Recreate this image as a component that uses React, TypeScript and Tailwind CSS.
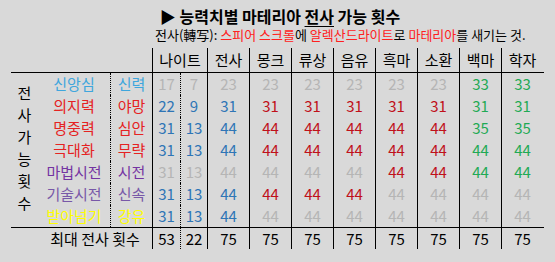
const font = "font-['Noto_Sans_CJK_KR','Noto_Sans_CJK_SC',sans-serif]";

const tone: Record<string, string> = {
  g: "text-[#b5b5b5]",
  b: "text-[#2e75b6]",
  r: "text-[#c0101a]",
  e: "text-[#1faa55]",
};

const jobs = ["전사", "몽크", "류상", "음유", "흑마", "소환", "백마", "학자"];

type Row = { name: string; abbr: string; color: string; values: string[] };

const rows: Row[] = [
  {
    name: "신앙심",
    abbr: "신력",
    color: "text-[#3fa6dd]",
    values: ["17g", "7g", "23g", "23g", "23g", "23g", "23g", "23g", "33e", "33e"],
  },
  {
    name: "의지력",
    abbr: "야망",
    color: "text-[#e52222]",
    values: ["22b", "9b", "31b", "31r", "31r", "31r", "31r", "31r", "31e", "31e"],
  },
  {
    name: "명중력",
    abbr: "심안",
    color: "text-[#e52222]",
    values: ["31b", "13b", "44b", "44r", "44r", "44r", "44r", "44r", "35e", "35e"],
  },
  {
    name: "극대화",
    abbr: "무략",
    color: "text-[#e52222]",
    values: ["31b", "13b", "44b", "44r", "44r", "44r", "44r", "44r", "44e", "44e"],
  },
  {
    name: "마법시전",
    abbr: "시전",
    color: "text-[#7434a2]",
    values: ["31g", "13g", "44g", "44g", "44g", "44g", "44r", "44r", "44e", "44e"],
  },
  {
    name: "기술시전",
    abbr: "신속",
    color: "text-[#7858a8]",
    values: ["31b", "13b", "44b", "44r", "44r", "44r", "44g", "44g", "44g", "44g"],
  },
  {
    name: "받아넘기",
    abbr: "강유",
    color: "text-[#ffff00]",
    values: ["31b", "13b", "44b", "44g", "44g", "44g", "44g", "44g", "44g", "44g"],
  },
];

function NumCells({ values }: { values: string[] }) {
  return (
    <>
      {values.map((v, i) => {
        const num = v.slice(0, -1);
        const c = tone[v.slice(-1)] ?? "text-black";
        const width =
          i === 0
            ? "w-[28px] border-l border-black"
            : i === 1
              ? "w-[27px] border-l border-dotted border-black"
              : "w-[42px] border-l border-black";
        return (
          <div key={i} className={`${width} flex items-center justify-center ${c}`}>
            {num}
          </div>
        );
      })}
    </>
  );
}

export default function App() {
  return (
    <div className={`h-[262px] w-[555px] bg-[#d9d9d9] text-black ${font}`}>
      <div className="flex h-[26px] justify-center pl-[5px] pt-[6px] text-[16px] font-bold leading-[20px]">
        <span>
          ▶ 능력치별 마테리아 <span className="underline underline-offset-[3px]">전사</span> 가능 횟수
        </span>
      </div>
      <div className="h-[18px] pl-[155px] text-[13px] leading-[18px]">
        전사(轉写): <span className="text-[#ff2020]">스피어 스크롤</span>에{" "}
        <span className="text-[#ff2020]">알렉산드라이트</span>로{" "}
        <span className="text-[#ff2020]">마테리아</span>를 새기는 것.
      </div>

      <div className="ml-[11px] mt-[4px] w-[533px] text-[15px]">
        <div className="flex h-[24px] leading-[24px]">
          <div className="w-[141px]" />
          <div className="flex w-[55px] justify-center border-l border-black">나이트</div>
          {jobs.map((j) => (
            <div key={j} className="flex w-[42px] justify-center border-l border-black">
              {j}
            </div>
          ))}
        </div>

        <div className="flex border-y border-black">
          <div className="flex w-[27px] flex-col items-center justify-center pb-[4px] leading-[22px]">
            {"전사가능횟수".split("").map((ch, i) => (
              <span key={i}>{ch}</span>
            ))}
          </div>
          <div className="flex flex-col">
            {rows.map((row) => (
              <div key={row.name} className="flex h-[22px] leading-[22px]">
                <div className={`flex w-[72px] justify-center ${row.color}`}>{row.name}</div>
                <div className={`flex w-[42px] justify-center border-l border-dotted border-black ${row.color}`}>
                  {row.abbr}
                </div>
                <NumCells values={row.values} />
              </div>
            ))}
          </div>
        </div>

        <div className="flex h-[21px] leading-[21px]">
          <div className="w-[27px]" />
          <div className="flex w-[114px] justify-center">최대 전사 횟수</div>
          <NumCells values={["53k", "22k", "75k", "75k", "75k", "75k", "75k", "75k", "75k", "75k"]} />
        </div>
      </div>
    </div>
  );
}
